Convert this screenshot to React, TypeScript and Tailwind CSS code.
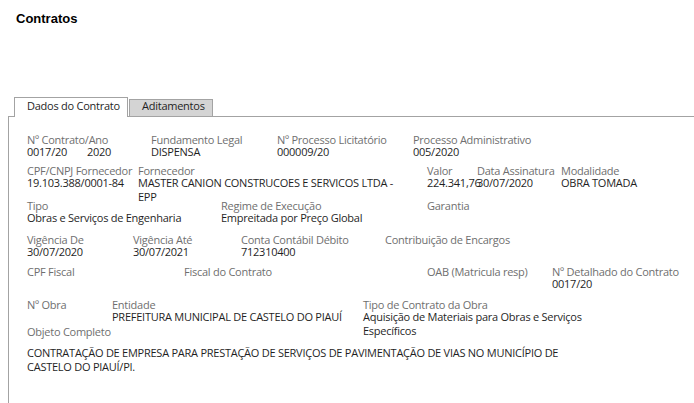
import React from "react";

function Field({
  label,
  value,
  w,
  valueClass = "",
}: {
  label: string;
  value?: React.ReactNode;
  w?: string;
  valueClass?: string;
}) {
  return (
    <div className={`shrink-0 ${w ?? ""}`}>
      <div className="leading-[11px] text-[#6f6f6f] whitespace-nowrap">{label}</div>
      {value !== undefined && (
        <div className={`leading-[14px] text-[#1f1f1f] ${valueClass}`}>{value}</div>
      )}
    </div>
  );
}

export default function App() {
  return (
    <div className="h-[403px] w-[694px] overflow-hidden bg-white flex flex-col">
      <div className="pl-[16px] pt-[11px] font-['Liberation_Sans',Arial,sans-serif] text-[13px] font-bold leading-[15px] text-black">
        Contratos
      </div>

      <div className="mt-[71px] ml-[8px] flex flex-1 flex-col font-['Open_Sans',sans-serif] text-[11px] tracking-[-0.25px]">
        {/* Tabs */}
        <div className="relative z-10 -mb-px flex items-end gap-[1px] pl-[6px]">
          <div className="h-[20px] w-[114px] border border-b-0 border-[#a3a3a3] bg-white pl-[12px] pt-[1px] leading-[14px] text-[#1f1f1f]">
            Dados do Contrato
          </div>
          <div className="h-[18px] w-[84px] border border-[#a3a3a3] bg-[#d4d4d4] pl-[12px] leading-[12px] text-[#1f1f1f]">
            Aditamentos
          </div>
        </div>

        {/* Panel */}
        <div className="flex-1 border-l border-t border-[#a3a3a3] pl-[18px] pt-[17px]">
          {/* Row 1 */}
          <div className="flex h-[31px] items-start">
            <Field
              w="w-[124px]"
              label="Nº Contrato/Ano"
              value={
                <div className="flex">
                  <span className="w-[60px]">0017/20</span>
                  <span>2020</span>
                </div>
              }
            />
            <Field w="w-[126px]" label="Fundamento Legal" value="DISPENSA" />
            <Field w="w-[136px]" label="Nº Processo Licitatório" value="000009/20" />
            <Field label="Processo Administrativo" value="005/2020" />
          </div>

          {/* Row 2 */}
          <div className="flex h-[35px] items-start">
            <Field w="w-[111px]" label="CPF/CNPJ Fornecedor" value="19.103.388/0001-84" />
            <Field
              w="w-[289px]"
              label="Fornecedor"
              value="MASTER CANION CONSTRUCOES E SERVICOS LTDA - EPP"
              valueClass="max-w-[262px]"
            />
            <Field w="w-[50px]" label="Valor" value="224.341,76" valueClass="whitespace-nowrap" />
            <Field w="w-[84px]" label="Data Assinatura" value="30/07/2020" valueClass="whitespace-nowrap" />
            <Field label="Modalidade" value="OBRA TOMADA" />
          </div>

          {/* Row 3 */}
          <div className="flex h-[34px] items-start">
            <Field w="w-[194px]" label="Tipo" value="Obras e Serviços de Engenharia" />
            <Field w="w-[206px]" label="Regime de Execução" value="Empreitada por Preço Global" />
            <Field label="Garantia" />
          </div>

          {/* Row 4 */}
          <div className="flex h-[32px] items-start">
            <Field w="w-[106px]" label="Vigência De" value="30/07/2020" />
            <Field w="w-[108px]" label="Vigência Até" value="30/07/2021" />
            <Field w="w-[144px]" label="Conta Contábil Débito" value="712310400" />
            <Field label="Contribuição de Encargos" />
          </div>

          {/* Row 5 */}
          <div className="flex h-[33px] items-start">
            <Field w="w-[157px]" label="CPF Fiscal" />
            <Field w="w-[243px]" label="Fiscal do Contrato" />
            <Field w="w-[125px]" label="OAB (Matricula resp)" />
            <Field label="Nº Detalhado do Contrato" value="0017/20" />
          </div>

          {/* Row 6 */}
          <div className="flex h-[27px] items-start">
            <Field w="w-[85px]" label="Nº Obra" />
            <Field w="w-[251px]" label="Entidade" value="PREFEITURA MUNICIPAL DE CASTELO DO PIAUÍ" valueClass="whitespace-nowrap" />
            <Field
              label="Tipo de Contrato da Obra"
              value="Aquisição de Materiais para Obras e Serviços Específicos"
              valueClass="w-[240px]"
            />
          </div>

          {/* Objeto */}
          <div className="leading-[12px] text-[#6f6f6f]">Objeto Completo</div>
          <div className="mt-[8px] w-[556px] leading-[14px] text-[#1f1f1f]">
            CONTRATAÇÃO DE EMPRESA PARA PRESTAÇÃO DE SERVIÇOS DE PAVIMENTAÇÃO DE VIAS NO MUNICÍPIO DE CASTELO DO PIAUÍ/PI.
          </div>
        </div>
      </div>
    </div>
  );
}
